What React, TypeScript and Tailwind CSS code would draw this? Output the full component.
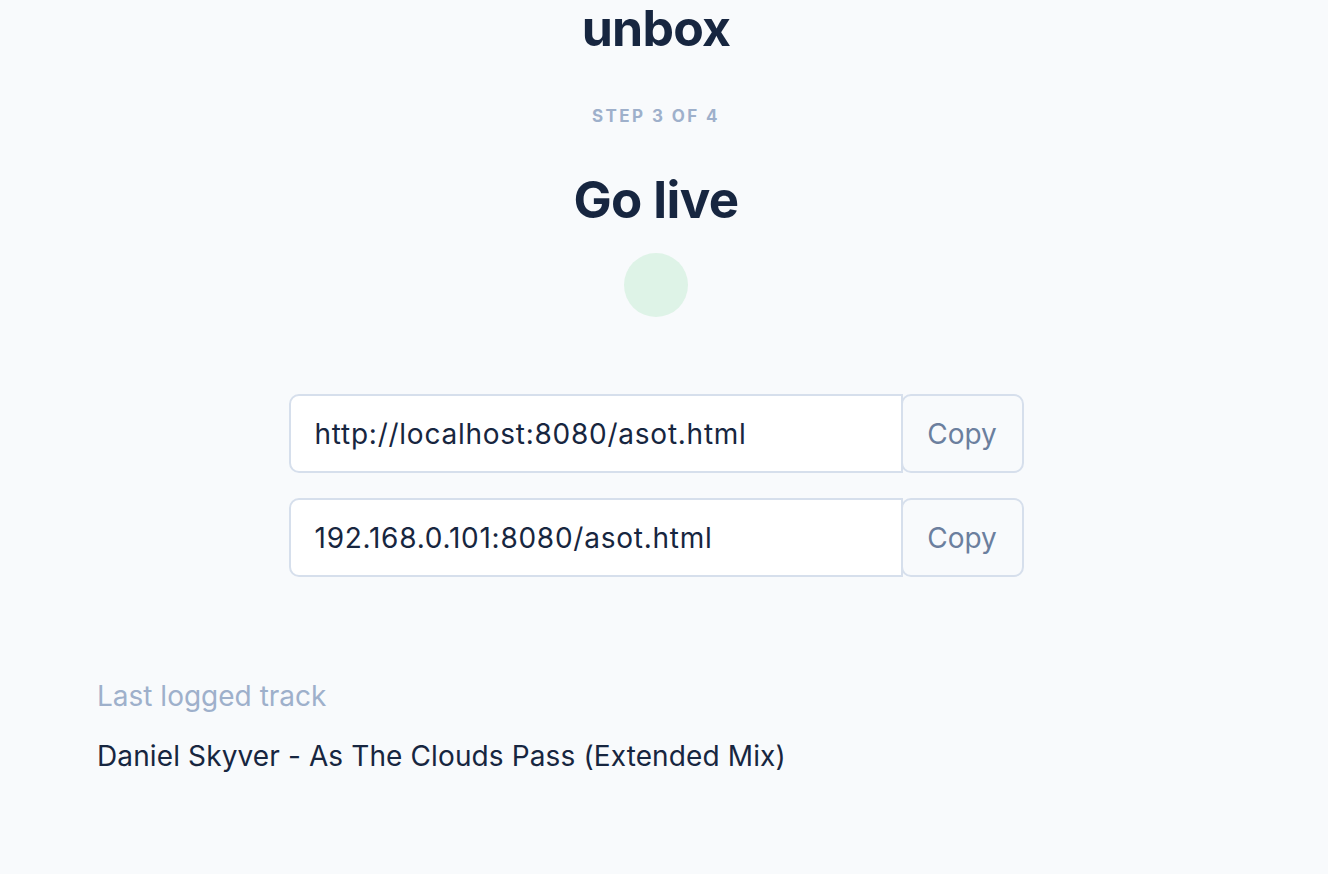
import React from "react";

const urls = ["http://localhost:8080/asot.html", "192.168.0.101:8080/asot.html"];

function UrlRow({ value }: { value: string }) {
    return (
        <div className="flex h-[79px]">
            <div className="flex items-center w-[614px] bg-white border-2 border-[#d6dfec] rounded-l-[10px] pl-[24px] text-[28px] tracking-[0.75px] text-[#172640]">
                {value}
            </div>
            <button className="w-[123px] -ml-[2px] bg-[#f8fafc] border-2 border-[#d6dfec] rounded-[10px] text-[28px] text-[#6b7f9e]">
                Copy
            </button>
        </div>
    );
}

export default function App() {
    return (
        <div className="min-h-[874px] w-full bg-[#f8fafc] font-['Inter',sans-serif]">
            <div className="w-[1312px] flex flex-col items-center">
                <h1 className="mt-0 text-[50px] leading-[56px] font-bold text-[#172640] tracking-[-0.8px]">unbox</h1>
                <div className="mt-[50px] text-[17px] leading-[20px] font-bold tracking-[2.4px] text-[#9eb0cb]">STEP 3 OF 4</div>
                <h2 className="mt-[46px] text-[51px] leading-[56px] font-bold text-[#172640] tracking-[-0.6px]">Go live</h2>
                <div className="mt-[25px] w-16 h-16 rounded-full bg-[#def3e7]" />
                <div className="mt-[77px] flex flex-col gap-[25px]">
                    {urls.map((u) => (
                        <UrlRow key={u} value={u} />
                    ))}
                </div>
            </div>
            <div className="pl-[97px] mt-[101px]">
                <div className="text-[28px] leading-[36px] text-[#9eb0cb]">Last logged track</div>
                <div className="mt-[24px] text-[28px] leading-[36px] tracking-[0.12px] text-[#172640]">Daniel Skyver - As The Clouds Pass (Extended Mix)</div>
            </div>
        </div>
    );
}
